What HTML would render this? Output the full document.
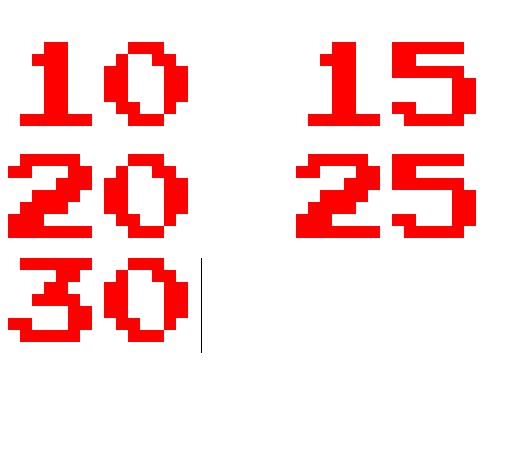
<!DOCTYPE html>
<html><head><meta charset="utf-8"><style>
html,body{margin:0;padding:0;background:#fff;width:516px;height:451px;overflow:hidden;position:relative}
svg{position:absolute;left:0;top:0}
.t{position:absolute;color:transparent;font:84px/84px "Liberation Mono",monospace;white-space:pre;left:8px}
</style></head><body>
<div class="t" style="top:42px">10  15</div>
<div class="t" style="top:154px">20  25</div>
<div class="t" style="top:258px">30</div>
<svg width="516" height="451" viewBox="0 0 516 451" shape-rendering="crispEdges">
<defs>
<g id="d1"><rect x="3" y="0" width="2" height="1"/><rect x="2" y="1" width="3" height="1"/><rect x="3" y="2" width="2" height="4"/><rect x="1" y="6" width="6" height="1"/></g>
<g id="d0"><rect x="2" y="0" width="3" height="1"/><rect x="1" y="1" width="1" height="1"/><rect x="4" y="1" width="2" height="1"/><rect x="0" y="2" width="2" height="3"/><rect x="5" y="2" width="2" height="3"/><rect x="1" y="5" width="2" height="1"/><rect x="5" y="5" width="1" height="1"/><rect x="2" y="6" width="3" height="1"/></g>
<g id="d5"><rect x="0" y="0" width="6" height="1"/><rect x="0" y="1" width="2" height="1"/><rect x="0" y="2" width="6" height="1"/><rect x="5" y="3" width="2" height="3"/><rect x="0" y="5" width="2" height="1"/><rect x="1" y="6" width="5" height="1"/></g>
<g id="d2"><rect x="1" y="0" width="5" height="1"/><rect x="0" y="1" width="2" height="1"/><rect x="5" y="1" width="2" height="1"/><rect x="4" y="2" width="3" height="1"/><rect x="2" y="3" width="4" height="1"/><rect x="1" y="4" width="4" height="1"/><rect x="0" y="5" width="3" height="1"/><rect x="0" y="6" width="7" height="1"/></g>
<g id="d3"><rect x="1" y="0" width="6" height="1"/><rect x="4" y="1" width="2" height="1"/><rect x="3" y="2" width="2" height="1"/><rect x="2" y="3" width="4" height="1"/><rect x="5" y="4" width="2" height="1"/><rect x="0" y="5" width="2" height="1"/><rect x="5" y="5" width="2" height="1"/><rect x="1" y="6" width="5" height="1"/></g>
</defs>
<g fill="#ff0000">
<use href="#d1" transform="translate(8 42) scale(12)"/>
<use href="#d0" transform="translate(104 42) scale(12)"/>
<use href="#d1" transform="translate(296 42) scale(12)"/>
<use href="#d5" transform="translate(392 42) scale(12)"/>
<use href="#d2" transform="translate(8 154) scale(12)"/>
<use href="#d0" transform="translate(104 154) scale(12)"/>
<use href="#d2" transform="translate(296 154) scale(12)"/>
<use href="#d5" transform="translate(392 154) scale(12)"/>
<use href="#d3" transform="translate(8 258) scale(12)"/>
<use href="#d0" transform="translate(104 258) scale(12)"/>
</g>
<rect x="201" y="258" width="1" height="95" fill="#000"/>
</svg>
</body></html>
